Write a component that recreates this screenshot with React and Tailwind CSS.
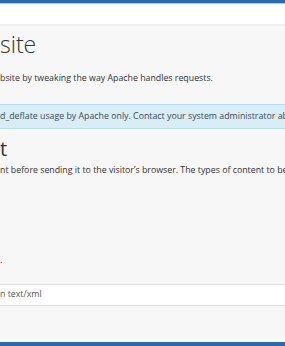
export default function App() {
  return (
    <div
      className="flex h-[346px] w-[285px] flex-col overflow-hidden bg-[#f7f7f7] text-[#333]"
      style={{ fontFamily: '"Open Sans", "Liberation Sans", sans-serif' }}
    >
      <div className="h-[3px] bg-[#2b6aa6]" />
      <div className="h-px bg-[#8fd6f2]" />
      <div className="h-[22px] border-b-2 border-[#efefef] bg-white" />

      <main className="flex flex-1 flex-col whitespace-nowrap">
        <h1 className="mt-[4px] text-[23px] font-light leading-[28px] text-[#333]">site</h1>
        <p className="mt-[14px] text-[8.8px] leading-[13px]">
          bsite by tweaking the way Apache handles requests.
        </p>

        <div className="mt-[19px] border-y border-[#b5dcec] bg-[#d9edf7] py-[5px] text-[8.8px] leading-[13px] text-[#3b4a52]">
          d_deflate usage by Apache only. Contact your system administrator ab
        </div>

        <h2 className="mt-[8px] text-[20px] font-normal leading-[24px]">t</h2>
        <p className="mt-[3px] text-[8.8px] leading-[13px]">
          nt before sending it to the visitor’s browser. The types of content to be
        </p>

        <p className="mt-[77px] text-[8.8px] leading-[13px]">.</p>

        <div className="mt-[17px] flex h-[22px] items-center border-y border-[#dcdcdc] bg-white text-[8.8px] text-[#555]">
          n text/xml
        </div>

        <div className="flex-1" />
        <div className="h-[3px] bg-[#fcfcfc]" />
      </main>

      <div className="h-[4px] bg-[#2b6aa6]" />
    </div>
  );
}
